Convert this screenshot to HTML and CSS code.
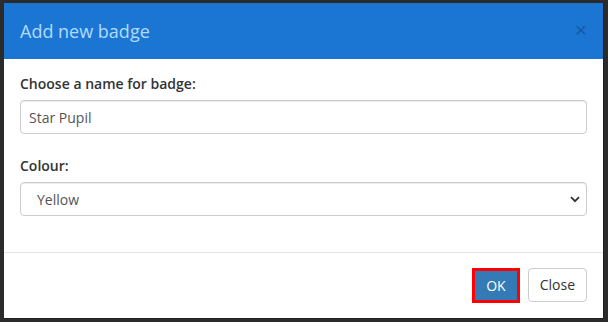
FILE: index.html
```html
<!DOCTYPE html>
<html lang="en">
<head>
    <meta charset="UTF-8">
    <title>Add new badge</title>
    <link rel="stylesheet" href="styles.css">
</head>
<body>
<div class="modal">
    <div class="modal-header">
        <h4 class="modal-title">Add new badge</h4>
        <button class="close" type="button">&times;</button>
    </div>
    <div class="modal-body">
        <div class="form-group">
            <label for="badgeName">Choose a name for badge:</label>
            <input id="badgeName" class="form-control" type="text" value="Star Pupil">
        </div>
        <div class="form-group">
            <label for="badgeColour">Colour:</label>
            <div class="select-wrap">
                <select id="badgeColour" class="form-control">
                    <option>Yellow</option>
                    <option>Red</option>
                    <option>Green</option>
                    <option>Blue</option>
                </select>
                <svg class="chevron" width="10" height="7" viewBox="0 0 10 7"><path d="M1 1.2 L5 5.2 L9 1.2" fill="none" stroke="#333" stroke-width="1.8"/></svg>
            </div>
        </div>
    </div>
    <div class="modal-footer">
        <button class="btn btn-primary highlighted" type="button">OK</button>
        <button class="btn btn-default" type="button">Close</button>
    </div>
</div>
</body>
</html>
```

FILE: styles.css
```css
body {
    margin: 0;
    padding: 3px 4px 4px 4px;
    background: #2b2b2b;
    font-family: 'Open Sans', 'Liberation Sans', sans-serif;
    font-size: 14px;
    line-height: 20px;
    color: #333;
}

.modal {
    background: #fff;
    border: 1px solid #1f1f1f;
    border-top: none;
    border-left: none;
    overflow: hidden;
}

.modal-header {
    display: flex;
    align-items: center;
    justify-content: space-between;
    background: #1a76d2;
    height: 56px;
    padding: 0 16px 0 16px;
    box-sizing: border-box;
}

.modal-title {
    margin: 0;
    font-size: 18px;
    font-weight: 400;
    color: #b3dbff;
}

.close {
    background: none;
    border: none;
    padding: 0;
    font-family: 'Liberation Sans', sans-serif;
    font-size: 21px;
    font-weight: 400;
    color: #000;
    opacity: 0.22;
    line-height: 1;
    margin-top: -4px;
}

.modal-body {
    padding: 15px 16px 36px 16px;
}

.form-group + .form-group {
    margin-top: 22px;
}

label {
    display: block;
    margin-bottom: 6px;
    font-weight: 600;
}

.form-control {
    display: block;
    width: 100%;
    box-sizing: border-box;
    height: 34px;
    padding: 6px 8px;
    font-family: inherit;
    font-size: 14px;
    color: #555;
    background: #fff;
    border: 1px solid #ccc;
    border-radius: 4px;
    box-shadow: inset 0 1px 1px rgba(0, 0, 0, 0.075);
}

.select-wrap {
    position: relative;
}

select.form-control {
    appearance: none;
    -webkit-appearance: none;
    padding-left: 16px;
}

.chevron {
    position: absolute;
    right: 7px;
    top: 14px;
    pointer-events: none;
}

.modal-footer {
    display: flex;
    justify-content: flex-end;
    gap: 8px;
    padding: 15px 16px 15px 15px;
    border-top: 1px solid #e5e5e5;
}

.btn {
    height: 34px;
    padding: 6px 11px;
    font-family: inherit;
    font-size: 14px;
    line-height: 20px;
    border: 1px solid transparent;
    border-radius: 4px;
    box-sizing: border-box;
}

.btn-primary {
    background: #337ab7;
    border-color: #2e6da4;
    color: #fff;
}

.btn-default {
    background: #fff;
    border-color: #ccc;
    color: #333;
}

.highlighted {
    height: 35px;
    border: 3px solid #ff0000;
    border-radius: 0;
    padding: 4px 11px;
}
```
